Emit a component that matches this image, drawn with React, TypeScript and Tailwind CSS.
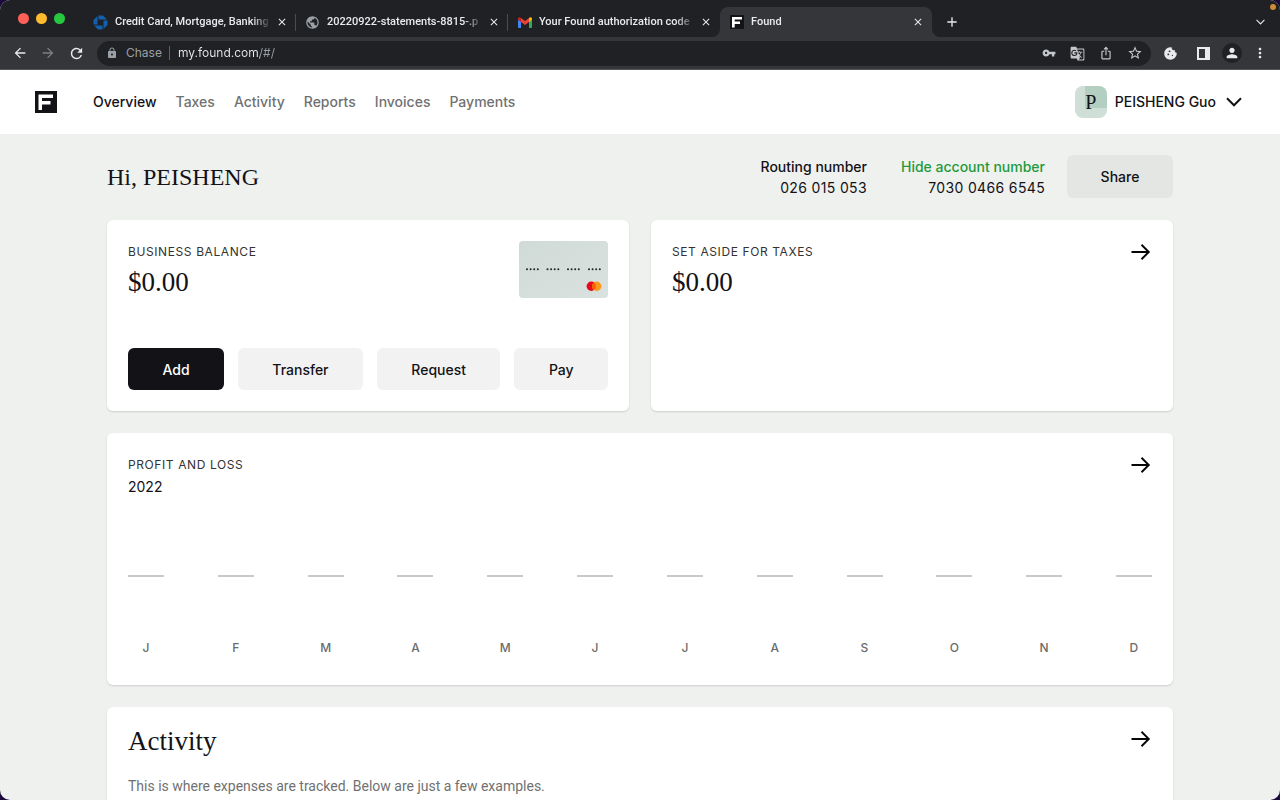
import React from "react";
import clsx from "clsx";
import {
  MdArrowBack,
  MdArrowForward,
  MdRefresh,
  MdLock,
  MdVpnKey,
  MdGTranslate,
  MdIosShare,
  MdStarBorder,
  MdCookie,
  MdPerson,
  MdMoreVert,
  MdPublic,
  MdClose,
  MdAdd,
} from "react-icons/md";

// --- Logos and icons ---
const FoundLogo = ({ className }: { className?: string }) => (
  <svg viewBox="0 0 22 22" className={className} aria-hidden="true">
    <rect width="22" height="22" fill="#131217" />
    <path
      d="M3.500 3.500H18V7H7V10H15.500V13.500H7V19H3.500Z"
      fill="#fff"
    />
  </svg>
);

const FoundFavicon = () => (
  <svg viewBox="0 0 14 14" className="size-[14px]" aria-hidden="true">
    <rect width="14" height="14" rx="1" fill="#131217" />
    <path d="M2 2H12V4.500H4.700V6.500H10V9H4.700V12.500H2Z" fill="#fff" />
  </svg>
);

const ChaseLogo = () => (
  <svg viewBox="0 0 30 30" className="size-[15px]" aria-hidden="true">
    <g fill="#1260ad">
      <path d="M11 1H20L28 9H11Z" />
      <path d="M29 11V20L21 28V11Z" />
      <path d="M19 29H10L2 21H19Z" />
      <path d="M1 19V10L9 2V19Z" />
    </g>
  </svg>
);

const GmailLogo = () => (
  <svg viewBox="0 0 28 22" className="h-[11px] w-[14px]" aria-hidden="true">
    <path d="M0 4V20a2 2 0 0 0 2 2H6V8Z" fill="#4285f4" />
    <path d="M28 4V20a2 2 0 0 1-2 2H22V8Z" fill="#34a853" />
    <path d="M22 2V10L28 5.500V3.500C28 .3 24.600-1 22 2Z" fill="#fbbc04" />
    <path d="M6 10V2L14 8L22 2V10L14 16Z" fill="#ea4335" />
    <path d="M0 3.500V5.500L6 10V2C3.400-1 0 .3 0 3.500Z" fill="#c5221f" />
  </svg>
);

const Arrow = () => (
  <svg
    viewBox="0 0 22 22"
    className="size-[22px]"
    fill="none"
    stroke="#050505"
    strokeWidth="1.9"
    aria-hidden="true"
  >
    <path d="M1.500 11H18.800M11.500 3.800L18.800 11L11.500 18.200" />
  </svg>
);

const Chevron = ({ className }: { className?: string }) => (
  <svg
    viewBox="0 0 16 10"
    className={className}
    fill="none"
    stroke="currentColor"
    strokeWidth="2"
    aria-hidden="true"
  >
    <path d="M1 1.300L8 8.300L15 1.300" />
  </svg>
);

const DebitCard = () => (
  <svg
    viewBox="0 0 89 57"
    className="h-[57px] w-[89px]"
    role="img"
    aria-label="Debit card"
  >
    <defs>
      <linearGradient id="card" x1="0" y1="0" x2="1" y2="1">
        <stop offset="0" stopColor="#d0dad6" />
        <stop offset="1" stopColor="#d9e2de" />
      </linearGradient>
    </defs>
    <rect width="89" height="57" rx="4" fill="url(#card)" />
    {[8, 28.5, 49, 70].map((x) =>
      [0, 1, 2, 3].map((i) => (
        <circle key={`${x}-${i}`} cx={x + i * 3.6} cy="28.2" r="1" fill="#222" />
      )),
    )}
    <circle cx="72.300" cy="45.200" r="4.700" fill="#e60a1c" />
    <circle cx="77.700" cy="45.200" r="4.700" fill="#f79a1f" />
    <path d="M75 41.400A4.700 4.700 0 0 1 75 49A4.700 4.700 0 0 1 75 41.400Z" fill="#fb5f02" />
  </svg>
);

// --- Browser chrome ---
const tabs = [
  { title: "Credit Card, Mortgage, Banking", icon: <ChaseLogo /> },
  {
    title: "20220922-statements-8815-.p",
    icon: <MdPublic className="size-[15px] text-[#9aa0a6]" />,
  },
  { title: "Your Found authorization code", icon: <GmailLogo /> },
  { title: "Found", icon: <FoundFavicon />, active: true },
];

const TabFlare = ({ className }: { className: string }) => (
  <svg viewBox="0 0 8 8" className={clsx("absolute bottom-0 size-2", className)}>
    <path d="M8 0V8H0A8 8 0 0 0 8 0Z" fill="#35363a" />
  </svg>
);

const TabStrip = () => (
  <div className="flex h-[37px] shrink-0 items-end bg-[#202124] pr-[15px] text-[#e8eaed]">
    <div className="flex h-[37px] w-[84px] shrink-0 items-center gap-[7px] pl-[18px]">
      <span className="size-[11px] rounded-full bg-[#fe5f57]" />
      <span className="size-[11px] rounded-full bg-[#febb2e]" />
      <span className="size-[11px] rounded-full bg-[#27c840]" />
    </div>
    {tabs.map((tab, i) => (
      <div
        key={tab.title}
        className={clsx(
          "relative flex h-[30px] w-[212px] items-center pr-2 pl-[9px]",
          tab.active && "rounded-t-lg bg-[#35363a]",
        )}
      >
        {tab.active && (
          <>
            <TabFlare className="-left-2" />
            <TabFlare className="-right-2 -scale-x-100" />
          </>
        )}
        <span className="flex w-[15px] shrink-0 justify-center">{tab.icon}</span>
        <span className="ml-[7px] min-w-0 flex-1 font-['Roboto',sans-serif] text-[11px] leading-4 font-medium whitespace-nowrap [mask-image:linear-gradient(90deg,#000_88%,transparent)]">
          {tab.title}
        </span>
        <button aria-label={`Close ${tab.title}`} className="ml-[5px]">
          <MdClose className="size-3" />
        </button>
        {i < 2 && <span className="absolute right-0 h-[17px] w-px bg-[#4a4c50]" />}
      </div>
    ))}
    <button aria-label="New tab" className="mb-[7px] ml-3">
      <MdAdd className="size-4" />
    </button>
    <button aria-label="Search tabs" className="mb-[12px] ml-auto">
      <Chevron className="h-[6px] w-[9px]" />
    </button>
  </div>
);

const Toolbar = () => (
  <div className="flex h-[33px] shrink-0 items-center border-b border-[#55565a] bg-[#35363a] pr-3 text-[#e8eaed]">
    <div className="flex w-[97px] shrink-0 items-center gap-3 pl-3">
      <button aria-label="Back">
        <MdArrowBack className="size-4" />
      </button>
      <button aria-label="Forward" className="text-[#7d7f83]">
        <MdArrowForward className="size-4" />
      </button>
      <button aria-label="Reload">
        <MdRefresh className="size-[17px]" />
      </button>
    </div>
    <div className="flex h-[25px] flex-1 items-center rounded-full bg-[#202124] pr-2 pl-[9px] text-[12px] text-[#9aa0a6]">
      <MdLock className="size-3" />
      <span className="ml-[8px] pr-[7px]">Chase</span>
      <span className="h-[14px] w-px bg-[#5f6368]" />
      <input
        aria-label="Address"
        defaultValue="my.found.com/#/"
        className="ml-2 min-w-0 flex-1 bg-[linear-gradient(90deg,#e8eaed_82px,#9aa0a6_82px)] bg-clip-text text-transparent outline-none"
      />
      <div className="flex items-center gap-[14px] text-[#c4c7cb]">
        <button aria-label="Passwords">
          <MdVpnKey className="size-[14px]" />
        </button>
        <button aria-label="Translate">
          <MdGTranslate className="size-[15px]" />
        </button>
        <button aria-label="Share page">
          <MdIosShare className="size-[14px]" />
        </button>
        <button aria-label="Bookmark">
          <MdStarBorder className="size-4" />
        </button>
      </div>
    </div>
    <button aria-label="Extension" className="ml-3">
      <MdCookie className="size-[15px]" />
    </button>
    <button aria-label="Side panel" className="ml-[19px]">
      <svg viewBox="0 0 13 13" className="size-[13px]">
        <rect x="1" y="1" width="11" height="11" fill="none" stroke="currentColor" strokeWidth="2" />
        <rect x="8" y="1" width="4" height="11" fill="currentColor" />
      </svg>
    </button>
    <button
      aria-label="Profile"
      className="ml-3 flex size-5 items-center justify-center rounded-full bg-[#202124]"
    >
      <MdPerson className="size-4" />
    </button>
    <button aria-label="Menu" className="ml-[10px]">
      <MdMoreVert className="size-4" />
    </button>
  </div>
);

// --- Page ---
const links = ["Overview", "Taxes", "Activity", "Reports", "Invoices", "Payments"];

const SiteHeader = () => (
  <header className="flex h-16 shrink-0 items-center bg-white pr-[38px] pl-[35px] text-[14px] leading-5 font-medium">
    <a href="#/" aria-label="Found">
      <FoundLogo className="size-[22px]" />
    </a>
    <nav className="ml-9 flex gap-[19px]">
      {links.map((link) => (
        <a
          key={link}
          href="#/"
          className={link === "Overview" ? "text-[#131217]" : "text-[#717171]"}
        >
          {link}
        </a>
      ))}
    </nav>
    <button className="ml-auto flex items-center">
      <span className="flex size-8 items-center justify-center rounded-lg bg-[#cfdfd7] bg-[linear-gradient(#b3cfc1,#b3cfc1)] bg-[length:22px_22px] bg-[position:right_top] bg-no-repeat font-['Liberation_Serif',serif] text-[20px]">
        P
      </span>
      <span className="ml-2">PEISHENG Guo</span>
      <Chevron className="ml-[10px] h-[10px] w-4" />
    </button>
  </header>
);

const Card = ({
  className,
  children,
}: {
  className?: string;
  children: React.ReactNode;
}) => (
  <section
    className={clsx(
      "rounded-[6px] bg-white p-[21px] shadow-[0_1px_2px_rgba(0,0,0,0.14)]",
      className,
    )}
  >
    {children}
  </section>
);

const Eyebrow = ({ children }: { children: React.ReactNode }) => (
  <h2 className="text-[12px] leading-[22px] tracking-wider text-[#333] uppercase">
    {children}
  </h2>
);

const Amount = () => (
  <p className="font-['Liberation_Serif',serif] text-[27px] leading-[38px] text-[#131217]">
    $0.00
  </p>
);

const ArrowLink = ({ label }: { label: string }) => (
  <a href="#/" aria-label={label} className="h-[22px]">
    <Arrow />
  </a>
);

const actions = ["Add", "Transfer", "Request", "Pay"];
const months = ["J", "F", "M", "A", "M", "J", "J", "A", "S", "O", "N", "D"];

export default function App() {
  return (
    <div className="h-screen bg-[#1b0b3d] font-['Inter',sans-serif]">
      <div className="relative flex h-full flex-col overflow-hidden rounded-[10px] bg-[#eff1ee] text-[#131217]">
        <TabStrip />
        <Toolbar />
        <span className="absolute top-1 right-1 size-[6px] rounded-full bg-[#d28a35]" />
        <SiteHeader />

        <main className="mx-auto flex w-full max-w-[1066px] flex-col gap-[22px] pt-[21px]">
          <div className="flex h-[43px] items-center">
            <h1 className="font-['Liberation_Serif',serif] text-[24px] leading-8">
              Hi, PEISHENG
            </h1>
            <div className="ml-auto text-right text-[14px] leading-[21px]">
              <p className="font-medium">Routing number</p>
              <p className="tracking-wide">026 015 053</p>
            </div>
            <div className="ml-[34px] flex flex-col items-end text-[14px] leading-[21px]">
              <button className="font-medium text-[#1f9a3c]">
                Hide account number
              </button>
              <p className="tracking-wide">7030 0466 6545</p>
            </div>
            <button className="ml-[22px] h-[43px] w-[106px] rounded-[6px] bg-[#e4e6e3] text-[14px] font-medium">
              Share
            </button>
          </div>

          <div className="grid grid-cols-2 gap-[22px]">
            <Card>
              <div className="flex justify-between">
                <div>
                  <Eyebrow>Business balance</Eyebrow>
                  <Amount />
                </div>
                <DebitCard />
              </div>
              <div className="mt-[47px] flex gap-[14px] text-[14px] font-medium">
                {actions.map((action) => (
                  <button
                    key={action}
                    className={clsx(
                      "h-[42px] flex-auto rounded-[6px] px-8",
                      action === "Add" ? "bg-[#131217] text-white" : "bg-[#f2f2f2]",
                    )}
                  >
                    {action}
                  </button>
                ))}
              </div>
            </Card>
            <Card className="flex items-start justify-between">
              <div>
                <Eyebrow>Set aside for taxes</Eyebrow>
                <Amount />
              </div>
              <ArrowLink label="Taxes" />
            </Card>
          </div>

          <Card>
            <div className="flex justify-between">
              <div>
                <Eyebrow>Profit and loss</Eyebrow>
                <p className="text-[14px] leading-[21px]">2022</p>
              </div>
              <ArrowLink label="Profit and loss" />
            </div>
            <div className="mt-[78px] mb-[5px] flex justify-between">
              {months.map((month, i) => (
                <div key={i} className="w-9 text-center">
                  <div className="h-[2px] bg-[#c9c9c9]" />
                  <p className="mt-[60px] text-[12px] leading-[22px] font-medium text-[#6b6b6b]">
                    {month}
                  </p>
                </div>
              ))}
            </div>
          </Card>

          <Card className="min-h-[240px]">
            <div className="flex justify-between">
              <h2 className="font-['Liberation_Serif',serif] text-[27px] leading-[26px]">
                Activity
              </h2>
              <ArrowLink label="Activity" />
            </div>
            <p className="mt-[22px] font-['Roboto',sans-serif] text-[14px] leading-[21px] text-[#717171]">
              This is where expenses are tracked. Below are just a few examples.
            </p>
          </Card>
        </main>
      </div>
    </div>
  );
}
